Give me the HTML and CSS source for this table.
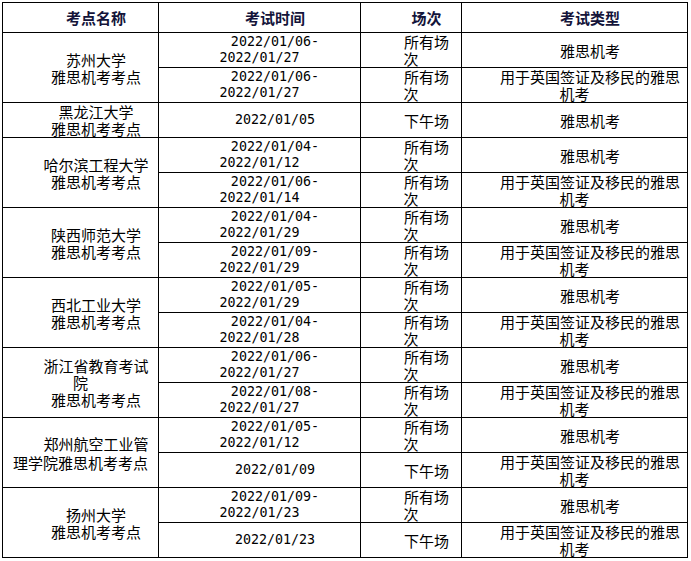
FILE: index.html
```html
<!DOCTYPE html>
<html lang="zh-CN">
<head>
<meta charset="utf-8">
<title>雅思机考考点</title>
<link rel="stylesheet" href="styles.css">
</head>
<body>
<table class="exam">
  <colgroup>
    <col class="c-site">
    <col class="c-date">
    <col class="c-sess">
    <col class="c-type">
  </colgroup>
  <thead>
    <tr><th>考点名称</th><th>考试时间</th><th>场次</th><th>考试类型</th></tr>
  </thead>
  <tbody>
    <tr>
      <td rowspan="2" class="site"><p>苏州大学</p><p>雅思机考考点</p></td>
      <td class="d">2022/01/06-<br>2022/01/27</td>
      <td>所有场<br>次</td>
      <td>雅思机考</td>
    </tr>
    <tr>
      <td class="d">2022/01/06-<br>2022/01/27</td>
      <td>所有场<br>次</td>
      <td>用于英国签证及移民的雅思<br>机考</td>
    </tr>
    <tr>
      <td class="site"><p>黑龙江大学</p><p>雅思机考考点</p></td>
      <td class="d">2022/01/05</td>
      <td>下午场</td>
      <td>雅思机考</td>
    </tr>
    <tr>
      <td rowspan="2" class="site"><p>哈尔滨工程大学</p><p>雅思机考考点</p></td>
      <td class="d">2022/01/04-<br>2022/01/12</td>
      <td>所有场<br>次</td>
      <td>雅思机考</td>
    </tr>
    <tr>
      <td class="d">2022/01/06-<br>2022/01/14</td>
      <td>所有场<br>次</td>
      <td>用于英国签证及移民的雅思<br>机考</td>
    </tr>
    <tr>
      <td rowspan="2" class="site"><p>陕西师范大学</p><p>雅思机考考点</p></td>
      <td class="d">2022/01/04-<br>2022/01/29</td>
      <td>所有场<br>次</td>
      <td>雅思机考</td>
    </tr>
    <tr>
      <td class="d">2022/01/09-<br>2022/01/29</td>
      <td>所有场<br>次</td>
      <td>用于英国签证及移民的雅思<br>机考</td>
    </tr>
    <tr>
      <td rowspan="2" class="site"><p>西北工业大学</p><p>雅思机考考点</p></td>
      <td class="d">2022/01/05-<br>2022/01/29</td>
      <td>所有场<br>次</td>
      <td>雅思机考</td>
    </tr>
    <tr>
      <td class="d">2022/01/04-<br>2022/01/28</td>
      <td>所有场<br>次</td>
      <td>用于英国签证及移民的雅思<br>机考</td>
    </tr>
    <tr>
      <td rowspan="2" class="site"><p>浙江省教育考试<br>院</p><p>雅思机考考点</p></td>
      <td class="d">2022/01/06-<br>2022/01/27</td>
      <td>所有场<br>次</td>
      <td>雅思机考</td>
    </tr>
    <tr>
      <td class="d">2022/01/08-<br>2022/01/27</td>
      <td>所有场<br>次</td>
      <td>用于英国签证及移民的雅思<br>机考</td>
    </tr>
    <tr>
      <td rowspan="2" class="site"><p class="wide">郑州航空工业管<br>理学院雅思机考考点</p></td>
      <td class="d">2022/01/05-<br>2022/01/12</td>
      <td>所有场<br>次</td>
      <td>雅思机考</td>
    </tr>
    <tr>
      <td class="d">2022/01/09</td>
      <td>下午场</td>
      <td>用于英国签证及移民的雅思<br>机考</td>
    </tr>
    <tr>
      <td rowspan="2" class="site"><p>扬州大学</p><p>雅思机考考点</p></td>
      <td class="d">2022/01/09-<br>2022/01/23</td>
      <td>所有场<br>次</td>
      <td>雅思机考</td>
    </tr>
    <tr>
      <td class="d">2022/01/23</td>
      <td>下午场</td>
      <td>用于英国签证及移民的雅思<br>机考</td>
    </tr>
  </tbody>
</table>
</body>
</html>
```

FILE: styles.css
```css
html, body {
  margin: 0;
  padding: 0;
  background: #ffffff;
}

body {
  padding: 2px 0 0 2px;
  font-family: "Noto Sans CJK SC", "Noto Sans", sans-serif;
  font-size: 15px;
  line-height: 17px;
  color: #000000;
}

.exam {
  border-collapse: separate;
  border-spacing: 0;
  table-layout: fixed;
  width: 686px;
  border-left: 1px solid #000000;
  border-top: 1px solid #000000;
}

.c-site { width: 156px; }
.c-date { width: 202px; }
.c-sess { width: 101px; }
.c-type { width: 226px; }

.exam th,
.exam td {
  border-right: 1px solid #000000;
  border-bottom: 1px solid #000000;
  padding: 0 5px;
  text-align: center;
  vertical-align: middle;
  text-indent: 31px;
  white-space: nowrap;
  font-weight: normal;
}

.exam th {
  height: 29px;
  font-weight: bold;
  color: #14143a;
}

.exam td {
  height: 34px;
}

.exam td p {
  margin: 0;
}

.exam td.site p.wide {
  line-height: 19px;
}

.exam td.d {
  font-family: "DejaVu Sans Mono", "Liberation Mono", monospace;
  font-size: 13.33px;
  line-height: 16px;
}
```
